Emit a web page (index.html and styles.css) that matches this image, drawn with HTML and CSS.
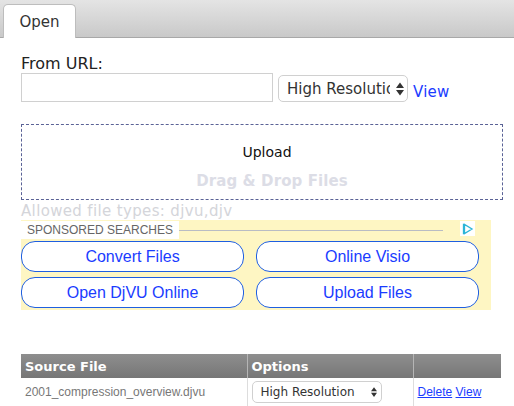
FILE: index.html
```html
<!DOCTYPE html>
<html lang="en">
<head>
<meta charset="utf-8">
<title>Open</title>
<link rel="stylesheet" href="styles.css">
</head>
<body>
<nav class="tabs"><a class="tab">Open</a></nav>
<main class="content">
  <label class="url-label" for="url">From URL:</label>
  <div class="url-row">
    <input class="url-input" id="url" type="text">
    <span class="select-wrap select-large">
      <select class="select"><option>High Resolution</option></select>
      <svg class="updown" viewBox="0 0 8 14" width="8" height="14"><path d="M4 0.5 8 6H0ZM4 13.5 0 8H8Z"/></svg>
    </span>
    <a class="view-link">View</a>
  </div>
  <div class="drop">
    <div class="upload">Upload</div>
    <div class="drag">Drag &amp; Drop Files</div>
  </div>
  <div class="allowed">Allowed file types: djvu,djv</div>
  <aside class="ad">
    <div class="ad-head">
      <span class="ad-title">SPONSORED SEARCHES</span>
      <span class="ad-line"></span>
      <span class="ad-badge"><svg viewBox="0 0 12 12" width="12" height="12"><path d="M2.5 1.5V10.5L10 6Z M2.5 1.5H1.5V10.5H2.5" fill="none" stroke="#2cb5d8" stroke-width="1.3"/></svg></span>
    </div>
    <div class="ad-grid">
      <a class="ad-btn">Convert Files</a>
      <a class="ad-btn">Online Visio</a>
      <a class="ad-btn">Open DjVU Online</a>
      <a class="ad-btn">Upload Files</a>
    </div>
  </aside>
  <table class="files">
    <thead>
      <tr><th class="c1">Source File</th><th class="c2">Options</th><th class="c3"></th></tr>
    </thead>
    <tbody>
      <tr>
        <td class="name">2001_compression_overview.djvu</td>
        <td class="opt">
          <span class="select-wrap select-small">
            <select class="select"><option>High Resolution</option></select>
            <svg class="updown" viewBox="0 0 8 14" width="6" height="11"><path d="M4 0.5 8 6H0ZM4 13.5 0 8H8Z"/></svg>
          </span>
        </td>
        <td class="acts"><a class="act">Delete</a> <a class="act">View</a></td>
      </tr>
    </tbody>
  </table>
</main>
</body>
</html>
```
FILE: styles.css
```css
html, body { margin: 0; padding: 0; height: 406px; overflow: hidden; background: #fff; }
body { font-family: "DejaVu Sans", sans-serif; color: #222; }

.tabs {
  height: 37px;
  box-sizing: content-box;
  padding-left: 3px;
  display: flex;
  align-items: flex-end;
  background: linear-gradient(#e4e4e4, #c9c9c9);
  border-bottom: 1px solid #a8a8a8;
}
.tab {
  width: 73px;
  height: 34px;
  margin-bottom: -1px;
  box-sizing: border-box;
  background: #fff;
  border: 1px solid #bdbdbd;
  border-bottom: 0;
  border-radius: 5px 5px 0 0;
  text-align: center;
  font-size: 15px;
  line-height: 34px;
  color: #333;
}

.content { padding: 17px 0 0 21px; }
.url-label { display: block; font-size: 16px; line-height: 18px; color: #222; }
.url-row { display: flex; align-items: flex-end; height: 29px; }
.url-input {
  width: 252px; height: 29px; box-sizing: border-box;
  border: 1px solid #d0d0d0; background: #fff; margin: 0; padding: 0;
}
.select-wrap { position: relative; display: block; }
.select {
  appearance: none; -webkit-appearance: none;
  display: block; box-sizing: border-box; width: 100%; height: 100%;
  margin: 0; background: #fff; border: 1px solid #d0d0d0; color: #333;
  font-family: "DejaVu Sans", sans-serif;
}
.updown { position: absolute; right: 4px; top: 50%; transform: translateY(-50%); fill: #333; }
.select-large { width: 130px; height: 27px; margin-left: 5px; }
.select-large .select { border-radius: 5px; font-size: 15px; padding: 0 17px 0 8px; }
.select-small { width: 130px; height: 22px; }
.select-small .select { border-radius: 5px; font-size: 12px; padding: 0 14px 0 8px; }
.select-small .updown { right: 5px; }
.view-link { margin-left: 5px; font-size: 15px; line-height: 18px; letter-spacing: .2px; color: #1a3cff; margin-bottom: 1px; }

.drop {
  margin-top: 22px; width: 482px; height: 76px; box-sizing: border-box;
  border: 1px dashed #5a6296; text-align: center;
}
.upload { margin-top: 19px; padding-left: 10px; font-size: 14px; line-height: 17px; color: #111; }
.drag { margin-top: 11px; padding-left: 20px; font-size: 15px; line-height: 18px; font-weight: 700; letter-spacing: .1px; color: #dcdde6; }
.allowed { padding-top: 2px; font-size: 15px; line-height: 18px; letter-spacing: .35px; color: #d4d5da; }

.ad { width: 470px; height: 90px; background: #fef6c3; }
.ad-head { height: 20px; display: flex; align-items: center; }
.ad-title {
  background: #fff; padding: 0 6px; height: 18px; line-height: 18px; align-self: flex-end; margin-bottom: 1px;
  font-family: "Liberation Sans", sans-serif; font-size: 12px; color: #666;
}
.ad-line { width: 264px; height: 1px; background: #b9bcc4; margin-top: 0; }
.ad-badge { margin-left: 17px; width: 15px; height: 15px; background: #fff; display: flex; align-items: center; justify-content: center; margin-top: -3px; }
.ad-grid { display: grid; grid-template-columns: 223px 223px; column-gap: 12px; row-gap: 5px; margin-top: 1px; }
.ad-btn {
  height: 31px; box-sizing: border-box; background: #fff;
  border: 1px solid #1f5fe0; border-radius: 14px;
  text-align: center; line-height: 29px;
  font-family: "Liberation Sans", sans-serif; font-size: 16px; color: #1a3cff;
}

.files { margin-top: 44px; width: 480px; border-collapse: collapse; table-layout: fixed; }
.files th {
  height: 24px; padding: 0 0 0 4px; box-sizing: border-box; text-align: left;
  font-size: 13px; font-weight: 700; color: #fff;
  background: linear-gradient(#8e8e8e, #767676);
  border-right: 1px solid #b5b5b5;
  font-family: "DejaVu Sans", sans-serif;
}
.files th.c3 { border-right: 0; }
.c1 { width: 226px; } .c2 { width: 166px; } .c3 { width: 88px; }
.files td { padding: 0 0 0 4px; height: 28px; border-right: 1px solid #ddd; vertical-align: middle; font-family: "Liberation Sans", sans-serif; font-size: 12px; }
.files td.acts { border-right: 0; }
.files td.name { color: #777; }
.act { color: #1a3cff; text-decoration: underline; }
```
